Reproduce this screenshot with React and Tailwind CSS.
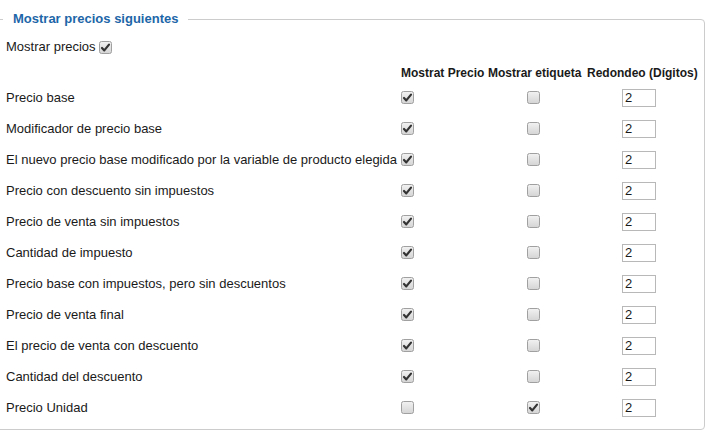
import React from "react";

const rows = [
  ["Precio base", true, false],
  ["Modificador de precio base", true, false],
  ["El nuevo precio base modificado por la variable de producto elegida", true, false],
  ["Precio con descuento sin impuestos", true, false],
  ["Precio de venta sin impuestos", true, false],
  ["Cantidad de impuesto", true, false],
  ["Precio base con impuestos, pero sin descuentos", true, false],
  ["Precio de venta final", true, false],
  ["El precio de venta con descuento", true, false],
  ["Cantidad del descuento", true, false],
  ["Precio Unidad", false, true],
];

function Check({ checked }) {
  return (
    <svg width="13" height="13" viewBox="0 0 13 13" className="block">
      <defs>
        <linearGradient id="cbg" x1="0" y1="0" x2="0" y2="1">
          <stop offset="0" stopColor="#f2f2f2" />
          <stop offset="1" stopColor="#d4d4d4" />
        </linearGradient>
      </defs>
      <rect x="0.5" y="0.5" width="12" height="12" rx="2" fill="url(#cbg)" stroke="#a0a0a0" />
      {checked && (
        <path d="M3 7 L5.3 9.4 L10 3.6" fill="none" stroke="#333333" strokeWidth="2.2" strokeLinecap="round" strokeLinejoin="round" />
      )}
    </svg>
  );
}

export default function App() {
  return (
    <div className="w-[713px] h-[439px] overflow-hidden bg-white text-[#1a1a1a] font-['Liberation_Sans',Arial,sans-serif] text-[13px]">
      <fieldset className="ml-[-6px] mt-[11px] w-[711px] border border-[#cccccc] rounded-[4px] pl-[11px] pb-[6px]">
        <legend className="ml-[-3px] px-[10px] text-[13px] leading-[16px] font-bold text-[#1d66a8]">
          Mostrar precios siguientes
        </legend>
        <div className="mt-[10px] h-[20px] flex items-center gap-[3px]">
          <span>Mostrar precios</span>
          <Check checked />
        </div>
        <div className="mt-[7px] grid grid-cols-[395px_87px_99px_110px]">
          <div className="h-[18px]" />
          <div className="h-[18px] flex items-center text-[12px] font-bold whitespace-nowrap">Mostrat Precio</div>
          <div className="h-[18px] flex items-center text-[12px] font-bold whitespace-nowrap">Mostrar etiqueta</div>
          <div className="h-[18px] flex items-center text-[12px] font-bold whitespace-nowrap">Redondeo (Dígitos)</div>
          {rows.map(([label, a, b], i) => (
            <React.Fragment key={i}>
              <div className="h-[31px] flex items-center whitespace-nowrap">{label}</div>
              <div className="h-[31px] flex items-center">
                <Check checked={a} />
              </div>
              <div className="h-[31px] flex items-center pl-[39px]">
                <Check checked={b} />
              </div>
              <div className="h-[31px] flex items-center pl-[35px]">
                <div className="w-[34px] h-[18px] border border-[#b8b8b8] bg-white flex items-center pl-[2px] text-[13px] leading-none">
                  2
                </div>
              </div>
            </React.Fragment>
          ))}
        </div>
      </fieldset>
    </div>
  );
}
